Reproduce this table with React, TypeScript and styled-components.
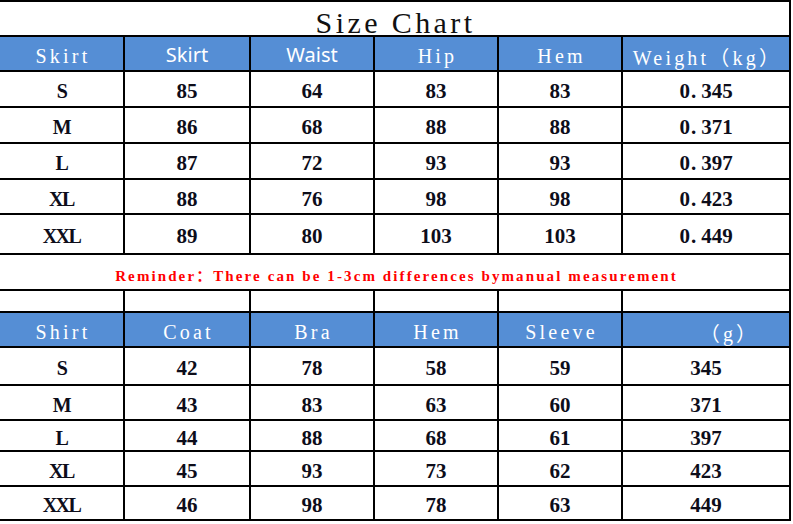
import React from "react";
import styled, { createGlobalStyle } from "styled-components";

const Global = createGlobalStyle`
  html, body { margin: 0; padding: 0; background: #ffffff; }
  body { width: 793px; height: 524px; overflow: hidden; }
`;

const COLS = "125px 126px 124px 124px 124px 166px";
const BLUE = "#558ed5";
const SONG = `"Liberation Serif", "Noto Sans CJK SC", serif`;

const Sheet = styled.div`
  width: 789px;
  border-top: 2px solid #000;
  border-right: 2px solid #000;
  box-sizing: content-box;
  display: flex;
  flex-direction: column;
`;

const Row = styled.div<{ $h: number }>`
  display: grid;
  grid-template-columns: ${COLS};
  height: ${(p) => p.$h}px;
`;

const WideRow = styled.div<{ $h: number }>`
  height: ${(p) => p.$h}px;
  border-bottom: 2px solid #000;
  box-sizing: border-box;
  display: flex;
  align-items: center;
  justify-content: center;
`;

const Title = styled.div`
  font-family: ${SONG};
  font-size: 30px;
  letter-spacing: 3.4px;
  color: #111;
  padding-top: 8px;
  padding-left: 2px;
`;

const Reminder = styled.div`
  font-family: ${SONG};
  font-size: 15px;
  font-weight: bold;
  letter-spacing: 2.1px;
  color: #ff0000;
  padding-top: 5px;
  padding-left: 4px;
`;

const Cell = styled.div<{ $head?: boolean; $last?: boolean }>`
  box-sizing: border-box;
  border-bottom: 2px solid #000;
  border-right: ${(p) => (p.$last ? "none" : "2px solid #000")};
  background: ${(p) => (p.$head ? BLUE : "#fff")};
  display: flex;
  align-items: center;
  justify-content: center;
  white-space: nowrap;
  overflow: hidden;
`;

const HeadSong = styled.span<{ $shift?: number }>`
  font-family: ${SONG};
  font-size: 20px;
  letter-spacing: 3.2px;
  color: #fff;
  padding-top: 6px;
  padding-left: ${(p) => (p.$shift ?? 0) + 3}px;
`;

const HeadSans = styled.span`
  font-family: "Noto Sans", "Noto Sans CJK SC", sans-serif;
  font-size: 20px;
  color: #fff;
  padding-top: 1px;
`;

const Num = styled.span`
  font-family: "Liberation Serif", serif;
  font-weight: bold;
  font-size: 21px;
  color: #0d0d1a;
  padding-top: 5px;
`;

const SizeLabel = styled(Num)`
  font-size: 20px;
  letter-spacing: -1.5px;
`;

const Dot = styled.span`
  padding: 0 5px 0 1px;
`;

type Head = { text: React.ReactNode; sans?: boolean; shift?: number };

const topHead: Head[] = [
  { text: "Skirt" },
  { text: "Skirt", sans: true },
  { text: "Waist", sans: true },
  { text: "Hip" },
  { text: "Hem" },
  { text: "Weight（kg）" },
];

const bottomHead: Head[] = [
  { text: "Shirt" },
  { text: "Coat" },
  { text: "Bra" },
  { text: "Hem" },
  { text: "Sleeve" },
  { text: "（g）", shift: 44 },
];

const topRows = [
  { h: 36, v: ["S", "85", "64", "83", "83", "0.345"] },
  { h: 36, v: ["M", "86", "68", "88", "88", "0.371"] },
  { h: 36, v: ["L", "87", "72", "93", "93", "0.397"] },
  { h: 35, v: ["XL", "88", "76", "98", "98", "0.423"] },
  { h: 40, v: ["XXL", "89", "80", "103", "103", "0.449"] },
];

const bottomRows = [
  { h: 38, v: ["S", "42", "78", "58", "59", "345"] },
  { h: 35, v: ["M", "43", "83", "63", "60", "371"] },
  { h: 31, v: ["L", "44", "88", "68", "61", "397"] },
  { h: 35, v: ["XL", "45", "93", "73", "62", "423"] },
  { h: 34, v: ["XXL", "46", "98", "78", "63", "449"] },
];

function HeaderRow({ heads }: { heads: Head[] }) {
  return (
    <Row $h={35}>
      {heads.map((hd, i) => (
        <Cell key={i} $head $last={i === 5}>
          {hd.sans ? (
            <HeadSans>{hd.text}</HeadSans>
          ) : (
            <HeadSong $shift={hd.shift}>{hd.text}</HeadSong>
          )}
        </Cell>
      ))}
    </Row>
  );
}

function renderValue(val: string) {
  const dot = val.indexOf(".");
  if (dot < 0) return val;
  return (
    <>
      {val.slice(0, dot)}
      <Dot>.</Dot>
      {val.slice(dot + 1)}
    </>
  );
}

function DataRow({ h, v }: { h: number; v: string[] }) {
  return (
    <Row $h={h}>
      {v.map((val, i) => (
        <Cell key={i} $last={i === 5}>
          {i === 0 ? <SizeLabel>{val}</SizeLabel> : <Num>{renderValue(val)}</Num>}
        </Cell>
      ))}
    </Row>
  );
}

export default function App() {
  return (
    <>
      <Global />
      <Sheet>
        <WideRow $h={35}>
          <Title>Size Chart</Title>
        </WideRow>
        <HeaderRow heads={topHead} />
        {topRows.map((r, i) => (
          <DataRow key={i} h={r.h} v={r.v} />
        ))}
        <WideRow $h={36}>
          <Reminder>Reminder：There can be 1-3cm differences bymanual measurement</Reminder>
        </WideRow>
        <Row $h={22}>
          {[0, 1, 2, 3, 4, 5].map((i) => (
            <Cell key={i} $last={i === 5} />
          ))}
        </Row>
        <HeaderRow heads={bottomHead} />
        {bottomRows.map((r, i) => (
          <DataRow key={i} h={r.h} v={r.v} />
        ))}
      </Sheet>
    </>
  );
}
